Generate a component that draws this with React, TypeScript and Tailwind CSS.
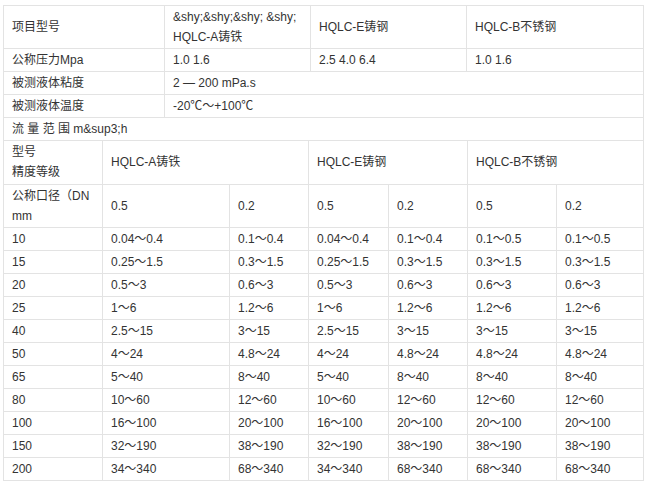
const cell = 'border border-[#e3e3e3] px-[8px] py-0 align-middle text-left font-normal';

const topCols = [161, 146, 156, 177];
const bottomCols = [99, 127, 79, 80, 79, 89, 87];

const flowRows: string[][] = [
  ['10', '0.04～0.4', '0.1～0.4', '0.04～0.4', '0.1～0.4', '0.1～0.5', '0.1～0.5'],
  ['15', '0.25～1.5', '0.3～1.5', '0.25～1.5', '0.3～1.5', '0.3～1.5', '0.3～1.5'],
  ['20', '0.5～3', '0.6～3', '0.5～3', '0.6～3', '0.6～3', '0.6～3'],
  ['25', '1～6', '1.2～6', '1～6', '1.2～6', '1.2～6', '1.2～6'],
  ['40', '2.5～15', '3～15', '2.5～15', '3～15', '3～15', '3～15'],
  ['50', '4～24', '4.8～24', '4～24', '4.8～24', '4.8～24', '4.8～24'],
  ['65', '5～40', '8～40', '5～40', '8～40', '8～40', '8～40'],
  ['80', '10～60', '12～60', '10～60', '12～60', '12～60', '12～60'],
  ['100', '16～100', '20～100', '16～100', '20～100', '20～100', '20～100'],
  ['150', '32～190', '38～190', '32～190', '38～190', '38～190', '38～190'],
  ['200', '34～340', '68～340', '34～340', '68～340', '68～340', '68～340'],
];

export default function App() {
  return (
    <div
      className="min-h-[484px] w-[647px] bg-white pl-[3px] pt-[5px] text-[12px] leading-[20px] text-[#333]"
      style={{ fontFamily: '"Liberation Sans", Arial, "Noto Sans CJK SC", sans-serif' }}
    >
      <table className="w-[641px] table-fixed border-collapse">
        <colgroup>
          {topCols.map((w, i) => (
            <col key={i} style={{ width: w }} />
          ))}
        </colgroup>
        <tbody>
          <tr className="h-[43px]">
            <td className={cell}>项目型号</td>
            <td className={cell}>
              &amp;shy;&amp;shy;&amp;shy; &amp;shy;
              <br />
              HQLC-A铸铁
            </td>
            <td className={cell}>HQLC-E铸钢</td>
            <td className={cell}>HQLC-B不锈钢</td>
          </tr>
          <tr className="h-[23px]">
            <td className={cell}>公称压力Mpa</td>
            <td className={cell}>1.0 1.6</td>
            <td className={cell}>2.5 4.0 6.4</td>
            <td className={cell}>1.0 1.6</td>
          </tr>
          <tr className="h-[23px]">
            <td className={cell}>被测液体粘度</td>
            <td className={cell} colSpan={3}>
              2 — 200 mPa.s
            </td>
          </tr>
          <tr className="h-[23px]">
            <td className={cell}>被测液体温度</td>
            <td className={cell} colSpan={3}>
              -20℃～+100℃
            </td>
          </tr>
          <tr className="h-[23px]">
            <td className={cell} colSpan={4}>
              流 量 范 围 m&amp;sup3;h
            </td>
          </tr>
        </tbody>
      </table>
      <table className="w-[641px] table-fixed border-collapse">
        <colgroup>
          {bottomCols.map((w, i) => (
            <col key={i} style={{ width: w }} />
          ))}
        </colgroup>
        <tbody>
          <tr className="h-[43px]">
            <td className={`${cell} border-t-0`}>
              型号
              <br />
              精度等级
            </td>
            <td className={`${cell} border-t-0`} colSpan={2}>
              HQLC-A铸铁
            </td>
            <td className={`${cell} border-t-0`} colSpan={2}>
              HQLC-E铸钢
            </td>
            <td className={`${cell} border-t-0`} colSpan={2}>
              HQLC-B不锈钢
            </td>
          </tr>
          <tr className="h-[43px]">
            <td className={cell}>
              公称口径（DN
              <br />
              mm
            </td>
            <td className={cell}>0.5</td>
            <td className={cell}>0.2</td>
            <td className={cell}>0.5</td>
            <td className={cell}>0.2</td>
            <td className={cell}>0.5</td>
            <td className={cell}>0.2</td>
          </tr>
          {flowRows.map((row) => (
            <tr key={row[0]} className="h-[23px]">
              {row.map((v, i) => (
                <td key={i} className={cell}>
                  {v}
                </td>
              ))}
            </tr>
          ))}
        </tbody>
      </table>
    </div>
  );
}
